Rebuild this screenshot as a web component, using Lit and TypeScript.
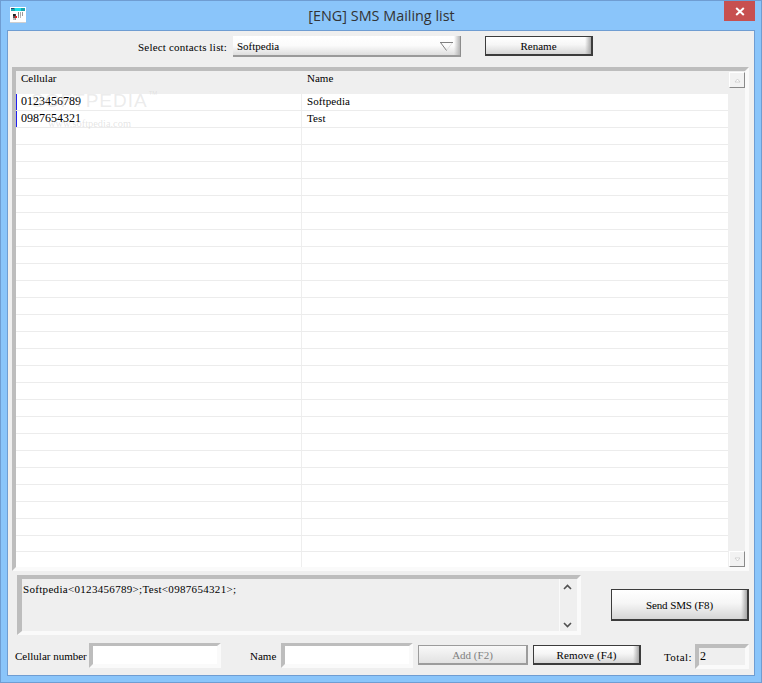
import { LitElement, html, css, svg } from "lit";
import { customElement } from "lit/decorators.js";

const ROWS = 27;
const data = [
  ["0123456789", "Softpedia"],
  ["0987654321", "Test"],
];

@customElement("app-root")
export class AppRoot extends LitElement {
  static styles = css`
    :host {
      display: block;
      width: 762px;
      height: 683px;
      font-family: "Liberation Serif", "Times New Roman", serif;
      font-size: 11px;
      color: #000;
    }
    * { box-sizing: border-box; }
    .window {
      width: 762px;
      height: 683px;
      background: #8ac5fa;
      border: 1px solid #6f9dd2;
      display: flex;
      flex-direction: column;
      overflow: hidden;
    }
    .titlebar {
      height: 30px;
      flex: none;
      display: grid;
      grid-template-columns: 1fr auto 1fr;
      align-items: start;
      padding-left: 9px;
      padding-right: 6px;
    }
    .appicon { width: 16px; height: 16px; margin-top: 6px; display: block; }
    .title {
      font-family: "Open Sans", "Noto Sans", sans-serif;
      font-size: 14.4px;
      line-height: 29px;
      color: #333;
      padding-right: 2px;
    }
    .close {
      justify-self: end;
      width: 31px;
      height: 20px;
      background: #c75050;
      display: flex;
      align-items: center;
      justify-content: center;
    }
    .client {
      margin: 0 7px 0 7px;
      height: 644px;
      flex: none;
      background: #efefef;
      outline: 1px solid #6f9dd2;
      display: flex;
      flex-direction: column;
      padding: 5px 5px 0 4px;
    }
    .toprow {
      height: 31px;
      flex: none;
      display: flex;
      align-items: flex-start;
      padding-left: 126px;
    }
    .toplabel { line-height: 23px; width: 95px; flex: none; letter-spacing: 0.2px; white-space: nowrap; }
    .combo {
      width: 228px;
      height: 21px;
      flex: none;
      background:
        linear-gradient(90deg, rgba(0,0,0,0) calc(100% - 6px), #b4b4b4 100%),
        linear-gradient(#ffffff 0, #fbfbfb 50%, #dedede 100%);
      border-right: 1px solid #8c8c8c;
      border-bottom: 2px solid #9a9a9a;
      display: flex;
      align-items: center;
      justify-content: space-between;
      padding: 1px 7px 0 4px;
      line-height: 18px;
    }
    .combo svg { width: 13px; height: 9px; display: block; margin-top: 1px; }
    .btn {
      height: 20px;
      flex: none;
      display: flex;
      align-items: center;
      justify-content: center;
      border: 1px solid #3c3c3c;
      border-right-width: 2px;
      border-bottom-width: 2px;
      background:
        linear-gradient(90deg, rgba(0,0,0,0) calc(100% - 6px), #a8a8a8 100%),
        linear-gradient(#ffffff 0, #f6f6f6 45%, #d6d6d6 100%);
      font-size: 11px;
      line-height: 1;
      padding-top: 2px;
    }
    .rename { width: 108px; margin-left: 24px; }
    .add { width: 110px; margin-left: 5px; border-color: #9c9c9c; color: #808080; background: linear-gradient(#f9f9f9, #e2e2e2); }
    .remove { width: 108px; margin-left: 5px; letter-spacing: 0.15px; }
    .sunken {
      border-style: solid;
      border-width: 4px;
      border-color: #bdbdbd #fafafa #fafafa #bdbdbd;
    }
    .table {
      width: 737px;
      height: 504px;
      flex: none;
      display: grid;
      grid-template-columns: 712px 17px;
      background: #efefef;
    }
    .table-main { display: flex; flex-direction: column; min-width: 0; position: relative; overflow: hidden; }
    .thead {
      height: 23px;
      flex: none;
      display: grid;
      grid-template-columns: 286px 1fr;
      line-height: 15px;
    }
    .thead span { padding-left: 5px; }
    .tbody { flex: 1; background: #fff; display: flex; flex-direction: column; min-height: 0; }
    .row {
      height: 17px;
      flex: none;
      display: grid;
      grid-template-columns: 286px 1fr;
      border-bottom: 1px solid #ececec;
      line-height: 15px;
    }
    .row.last { height: 16px; }
    .cell { padding-left: 5px; border-right: 1px solid #eeeeee; white-space: nowrap; }
    .cell + .cell { border-right: none; padding-left: 5px; letter-spacing: 0.1px; }
    .row.on .cell:first-child { border-left: 1px solid #2020f0; padding-left: 4px; font-size: 12px; }
    .filler { flex: 1; display: grid; grid-template-columns: 286px 1fr; }
    .filler i { border-right: 1px solid #eeeeee; }
    .mark {
      position: absolute;
      left: 15px;
      top: 19px;
      font-family: "Liberation Sans", sans-serif;
      font-size: 19px;
      line-height: 22px;
      letter-spacing: 1px;
      color: rgba(190, 190, 190, 0.3);
      pointer-events: none;
      white-space: nowrap;
    }
    .mark sup { font-size: 6px; line-height: 0; vertical-align: 12px; letter-spacing: 0; margin-left: 1px; }
    .mark2 {
      position: absolute;
      left: 32px;
      top: 47px;
      font-family: "Liberation Serif", serif;
      font-size: 10.4px;
      line-height: 12px;
      color: rgba(170, 170, 170, 0.32);
      pointer-events: none;
      white-space: nowrap;
    }
    .vscroll { display: flex; flex-direction: column; justify-content: space-between; padding: 1px 0 0 1px; background: #efefef; height: 100%; }
    .sbtn {
      width: 16px;
      height: 16px;
      background: #f2f2f2;
      border-right: 1px solid #8a8a8a;
      border-bottom: 1px solid #8a8a8a;
      border-top: 1px solid #fff;
      border-left: 1px solid #fff;
      display: flex;
      align-items: center;
      justify-content: center;
    }
    .sbtn svg { width: 7px; height: 5px; display: block; }
    .middle {
      height: 72px;
      flex: none;
      display: flex;
      align-items: flex-start;
      padding: 4px 0 0 5px;
    }
    .msg {
      width: 564px;
      height: 60px;
      flex: none;
      display: grid;
      grid-template-columns: 1fr 17px;
      border-width: 4px 4px 4px 5px;
    }
    .msg-text { padding: 3px 0 0 1px; line-height: 14px; letter-spacing: 0.31px; border-right: 1px solid #fafafa; white-space: nowrap; }
    .msg-scroll { display: flex; flex-direction: column; justify-content: space-between; align-items: center; padding: 2px 3px 0 0; }
    .msg-scroll svg { width: 9px; height: 6px; display: block; margin: 3px 0; }
    .send { width: 138px; height: 32px; margin: 14px 0 0 30px; letter-spacing: -0.1px; }
    .bottom {
      height: 30px;
      flex: none;
      display: flex;
      align-items: flex-start;
      padding-left: 3px;
    }
    .blabel { line-height: 26px; flex: none; white-space: nowrap; }
    .field { height: 25px; background: #fff; flex: none; width: 132px; border-top-width: 3px; }
    .b1 { width: 74px; }
    .b2 { width: 31px; margin-left: 29px; }
    .bottom .btn { margin-top: 2px; }
    .b3 { margin-left: 23px; width: 31px; line-height: 28px; letter-spacing: 0.4px; }
    .total {
      width: 54px;
      height: 25px;
      background: #efefef;
      padding: 1px 0 0 1px;
      line-height: 14px;
      font-size: 12px;
      flex: none;
      margin-top: 1px;
    }
  `;

  private icon() {
    const cells = [
      [8, 5, 1, "#888"], [10, 5, 1, "#aaa"], [12, 5, 1, "#999"],
      [3, 7, 2, "#222"], [5, 7, 1, "#444"], [8, 7, 1, "#888"], [10, 7, 1, "#aaa"], [12, 7, 1, "#999"],
      [3, 9, 2, "#555"], [5, 9, 2, "#e02020"], [8, 9, 1, "#999"], [10, 9, 1, "#bbb"],
      [3, 11, 2, "#bbb"], [5, 11, 1, "#999"],
    ] as const;
    return html`<svg class="appicon" viewBox="0 0 16 16" shape-rendering="crispEdges">
      <rect width="16" height="16" fill="#fff" />
      <rect y="15" width="16" height="1" fill="#cfcfcf" />
      <rect x="1" y="1" width="14" height="3" fill="#1aa6b0" />
      <rect x="5" y="1" width="6" height="3" fill="#19e0e8" />
      <rect x="1" y="1" width="3" height="1" fill="#2c4a70" />
      ${cells.map(([x, y, w, c]) => svg`<rect x=${x} y=${y} width=${w} height="2" fill=${c} />`)}
    </svg>`;
  }

  private tri(up: boolean) {
    return html`<svg viewBox="0 0 7 5"><path d=${up ? "M3.5 1 6 4H1Z" : "M3.5 4 6 1H1Z"} fill="#fff" stroke="#c4c4c4" stroke-width="0.7" /></svg>`;
  }

  private chev(up: boolean) {
    return html`<svg viewBox="0 0 9 6"><path d=${up ? "M1 5 4.5 1.5 8 5" : "M1 1 4.5 4.5 8 1"} fill="none" stroke="#505050" stroke-width="1.6" /></svg>`;
  }

  render() {
    const empty = Array.from({ length: ROWS - data.length });
    return html`<div class="window">
      <div class="titlebar">
        ${this.icon()}
        <div class="title">[ENG] SMS Mailing list</div>
        <div class="close">
          <svg width="10" height="9" viewBox="0 0 10 9"><path d="M1.2 1 8.8 8M8.8 1 1.2 8" stroke="#fff" stroke-width="2" fill="none" /></svg>
        </div>
      </div>
      <div class="client">
        <div class="toprow">
          <span class="toplabel">Select contacts list:</span>
          <div class="combo">
            <span>Softpedia</span>
            <svg viewBox="0 0 13 9">
              <path d="M6.5 8.5 12.5.5" stroke="#e2e2e2" fill="none" />
              <path d="M0 .5H13M.5.5 6.5 8.5" stroke="#808080" fill="none" />
            </svg>
          </div>
          <div class="btn rename">Rename</div>
        </div>
        <div class="table sunken">
          <div class="table-main">
            <div class="thead"><span>Cellular</span><span>Name</span></div>
            <div class="tbody">
              ${data.map(([a, b]) => html`<div class="row on"><div class="cell">${a}</div><div class="cell">${b}</div></div>`)}
              ${empty.map((_, i) => html`<div class="row ${i === empty.length - 1 ? "last" : ""}"><div class="cell"></div><div class="cell"></div></div>`)}
              <div class="filler"><i></i><span></span></div>
            </div>
            <div class="mark">SOFTPEDIA<sup>TM</sup></div>
            <div class="mark2">www.softpedia.com</div>
          </div>
          <div class="vscroll">
            <div class="sbtn">${this.tri(true)}</div>
            <div class="sbtn">${this.tri(false)}</div>
          </div>
        </div>
        <div class="middle">
          <div class="msg sunken">
            <div class="msg-text">Softpedia&lt;0123456789&gt;;Test&lt;0987654321&gt;;</div>
            <div class="msg-scroll">${this.chev(true)}${this.chev(false)}</div>
          </div>
          <div class="btn send">Send SMS (F8)</div>
        </div>
        <div class="bottom">
          <span class="blabel b1">Cellular number</span>
          <div class="field sunken"></div>
          <span class="blabel b2">Name</span>
          <div class="field sunken"></div>
          <div class="btn add">Add (F2)</div>
          <div class="btn remove">Remove (F4)</div>
          <span class="blabel b3">Total:</span>
          <div class="total sunken">2</div>
        </div>
      </div>
    </div>`;
  }
}
